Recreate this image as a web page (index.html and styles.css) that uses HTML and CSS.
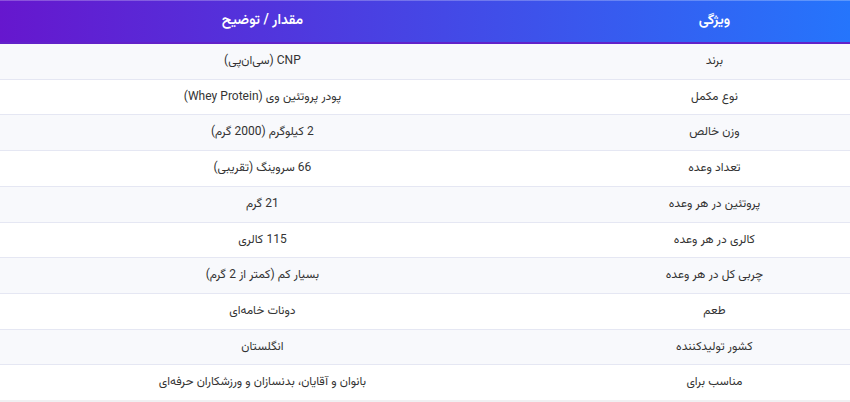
FILE: index.html
```html
<!DOCTYPE html>
<html lang="fa" dir="rtl">
<head>
<meta charset="utf-8">
<title>مشخصات محصول</title>
<link rel="stylesheet" href="styles.css">
</head>
<body>
<div class="table-wrap">
  <table class="spec-table">
    <thead>
      <tr>
        <th class="col-key">ویژگی</th>
        <th class="col-val">مقدار / توضیح</th>
      </tr>
    </thead>
    <tbody>
      <tr><td>برند</td><td>CNP (سی‌ان‌پی)</td></tr>
      <tr><td>نوع مکمل</td><td>پودر پروتئین وی (Whey Protein)</td></tr>
      <tr><td>وزن خالص</td><td>2 کیلوگرم (2000 گرم)</td></tr>
      <tr><td>تعداد وعده</td><td>66 سروینگ (تقریبی)</td></tr>
      <tr><td>پروتئین در هر وعده</td><td>21 گرم</td></tr>
      <tr><td>کالری در هر وعده</td><td>115 کالری</td></tr>
      <tr><td>چربی کل در هر وعده</td><td>بسیار کم (کمتر از 2 گرم)</td></tr>
      <tr><td>طعم</td><td>دونات خامه‌ای</td></tr>
      <tr><td>کشور تولیدکننده</td><td>انگلستان</td></tr>
      <tr><td>مناسب برای</td><td>بانوان و آقایان، بدنسازان و ورزشکاران حرفه‌ای</td></tr>
    </tbody>
  </table>
</div>
</body>
</html>
```
FILE: styles.css
```css
html, body {
  margin: 0;
  padding: 0;
}
body {
  background: #f0f0f2;
  font-family: Vazirmatn, "Noto Sans Arabic", "DejaVu Sans", sans-serif;
  color: #333;
  direction: rtl;
}
.table-wrap {
  width: 850px;
  height: 400px;
  overflow: hidden;
  direction: rtl;
  background: #fff;
}
.spec-table {
  width: 904px;
  border-collapse: collapse;
  table-layout: fixed;
}
.spec-table th,
.spec-table td {
  box-sizing: border-box;
  text-align: center;
}
.spec-table thead tr {
  background: linear-gradient(to right, #6a11cb, #2575fc);
}
.spec-table th {
  background: transparent;
  color: #fff;
  font-size: 14px;
  font-weight: 600;
  line-height: 22px;
  padding: 10px 12px;
  border-bottom: 2px solid #6222c9;
  box-shadow: inset 0 1px 0 rgba(255, 255, 255, 0.25);
}
.spec-table th.col-key {
  width: 30%;
}
.spec-table td {
  font-size: 12px;
  line-height: 20.7px;
  padding: 7px 12px;
  border-bottom: 1px solid #e5e7f3;
}
.spec-table tbody tr:nth-child(odd) {
  background: #f8f9fc;
}
.spec-table tbody tr:nth-child(even) {
  background: #fff;
}
```
